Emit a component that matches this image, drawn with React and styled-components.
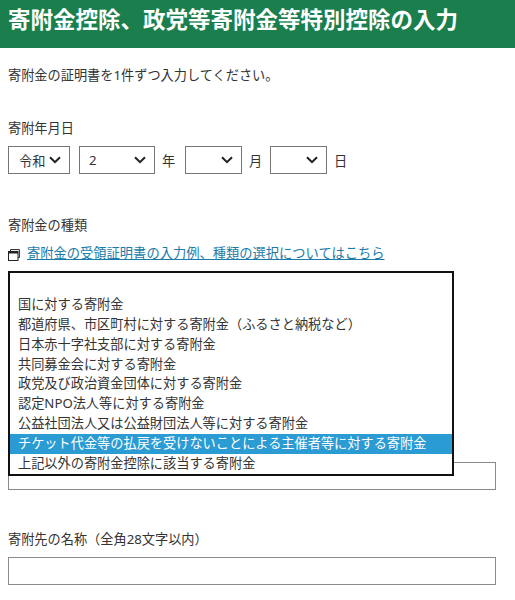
import React from "react";
import styled, { createGlobalStyle } from "styled-components";

const GlobalStyle = createGlobalStyle`
  html, body {
    margin: 0;
    padding: 0;
    background: #fff;
  }
  body {
    font-family: "Noto Sans", "Noto Sans CJK JP", sans-serif;
    font-size: 13.2px;
    color: #333;
  }
`;

const kinds = [
  "",
  "国に対する寄附金",
  "都道府県、市区町村に対する寄附金（ふるさと納税など）",
  "日本赤十字社支部に対する寄附金",
  "共同募金会に対する寄附金",
  "政党及び政治資金団体に対する寄附金",
  "認定NPO法人等に対する寄附金",
  "公益社団法人又は公益財団法人等に対する寄附金",
  "チケット代金等の払戻を受けないことによる主催者等に対する寄附金",
  "上記以外の寄附金控除に該当する寄附金",
];

const Chevron = () => (
  <svg width="12" height="8" viewBox="0 0 12 8" fill="none">
    <path d="M1 1.2L6 6.2L11 1.2" stroke="#222" strokeWidth="2" />
  </svg>
);

const WindowIcon = () => (
  <IconSvg width="12" height="12" viewBox="0 0 12 12" fill="none">
    <path d="M2.5 2V0.6H11.4V8.5H10" stroke="#222" />
    <rect x="0.5" y="2.5" width="9.5" height="9" fill="#fff" stroke="#222" />
    <rect x="0.5" y="2" width="9.5" height="2.5" fill="#222" />
  </IconSvg>
);

export default function App() {
  return (
    <Page>
      <GlobalStyle />
      <Header>
        <Title>寄附金控除、政党等寄附金等特別控除の入力</Title>
      </Header>
      <Content>
        <Intro>寄附金の証明書を1件ずつ入力してください。</Intro>

        <DateSection>
          <Label>寄附年月日</Label>
          <DateRow>
            <SelectBox $width={62} $padding={10}>
              令和
              <Chevron />
            </SelectBox>
            <SelectBox $width={76} $padding={9} $gapLeft={9}>
              2
              <Chevron />
            </SelectBox>
            <Unit $width={30}>年</Unit>
            <SelectBox $width={57}>
              <span />
              <Chevron />
            </SelectBox>
            <Unit $width={28}>月</Unit>
            <SelectBox $width={57}>
              <span />
              <Chevron />
            </SelectBox>
            <Unit $width={30}>日</Unit>
          </DateRow>
        </DateSection>

        <KindSection>
          <Label>寄附金の種類</Label>
          <LinkRow>
            <WindowIcon />
            <HelpLink href="#">寄附金の受領証明書の入力例、種類の選択についてはこちら</HelpLink>
          </LinkRow>
          <KindField>
            <KindList>
              {kinds.map((kind, i) => (
                <KindItem key={i} $selected={i === 8}>
                  {kind}
                </KindItem>
              ))}
            </KindList>
          </KindField>
          <TextInput type="text" />
        </KindSection>

        <NameSection>
          <Label>寄附先の名称（全角28文字以内）</Label>
          <TextInput type="text" />
        </NameSection>
      </Content>
    </Page>
  );
}

const Page = styled.div`
  width: 515px;
  height: 600px;
  overflow: hidden;
`;

const Header = styled.header`
  height: 48px;
  background: #1b7f4d;
  display: flex;
  align-items: center;
  padding: 0 8px;
`;

const Title = styled.h1`
  margin: 0 0 9px;
  font-size: 22.5px;
  line-height: 30px;
  font-weight: 700;
  color: #fff;
  white-space: nowrap;
`;

const Content = styled.main`
  padding: 0 19px 0 8px;
`;

const Intro = styled.p`
  margin: 17px 0 0;
  line-height: 20px;
`;

const DateSection = styled.section`
  margin-top: 33px;
`;

const Label = styled.div`
  line-height: 20px;
`;

const DateRow = styled.div`
  display: flex;
  align-items: center;
  margin-top: 8px;
`;

const SelectBox = styled.div`
  box-sizing: border-box;
  width: ${(p) => p.$width}px;
  height: 28px;
  margin-left: ${(p) => p.$gapLeft || 0}px;
  padding: 0 8px 0 ${(p) => p.$padding || 8}px;
  border: 1px solid #767676;
  background: #fff;
  display: flex;
  align-items: center;
  justify-content: space-between;
`;

const Unit = styled.span`
  width: ${(p) => p.$width}px;
  padding-left: 7px;
  box-sizing: border-box;
`;

const KindSection = styled.section`
  margin-top: 41px;
`;

const LinkRow = styled.div`
  display: flex;
  align-items: center;
  gap: 7px;
  margin-top: 8px;
  line-height: 20px;
`;

const IconSvg = styled.svg`
  margin-top: 3px;
`;

const HelpLink = styled.a`
  color: #1a7ba8;
  font-size: 13.27px;
  text-decoration: underline;
  white-space: nowrap;
`;

const KindField = styled.div`
  position: relative;
  height: 191px;
  margin-top: 8px;
`;

const KindList = styled.ul`
  position: absolute;
  top: 0;
  left: 0;
  z-index: 2;
  box-sizing: border-box;
  width: 446px;
  height: 205px;
  margin: 0;
  padding: 2px 0 0;
  list-style: none;
  background: #fff;
  border: 2px solid #111;
`;

const KindItem = styled.li`
  height: 19.9px;
  line-height: 19.9px;
  padding-left: 8px;
  white-space: nowrap;
  background: ${(p) => (p.$selected ? "#2a9bd3" : "transparent")};
  color: ${(p) => (p.$selected ? "#fff" : "#333")};
`;

const TextInput = styled.input`
  display: block;
  box-sizing: border-box;
  width: 488px;
  height: 28px;
  padding: 0 8px;
  border: 1px solid #8a8a8a;
  border-radius: 0;
  background: #fff;
`;

const NameSection = styled.section`
  margin-top: 39px;

  ${TextInput} {
    margin-top: 8px;
  }
`;
